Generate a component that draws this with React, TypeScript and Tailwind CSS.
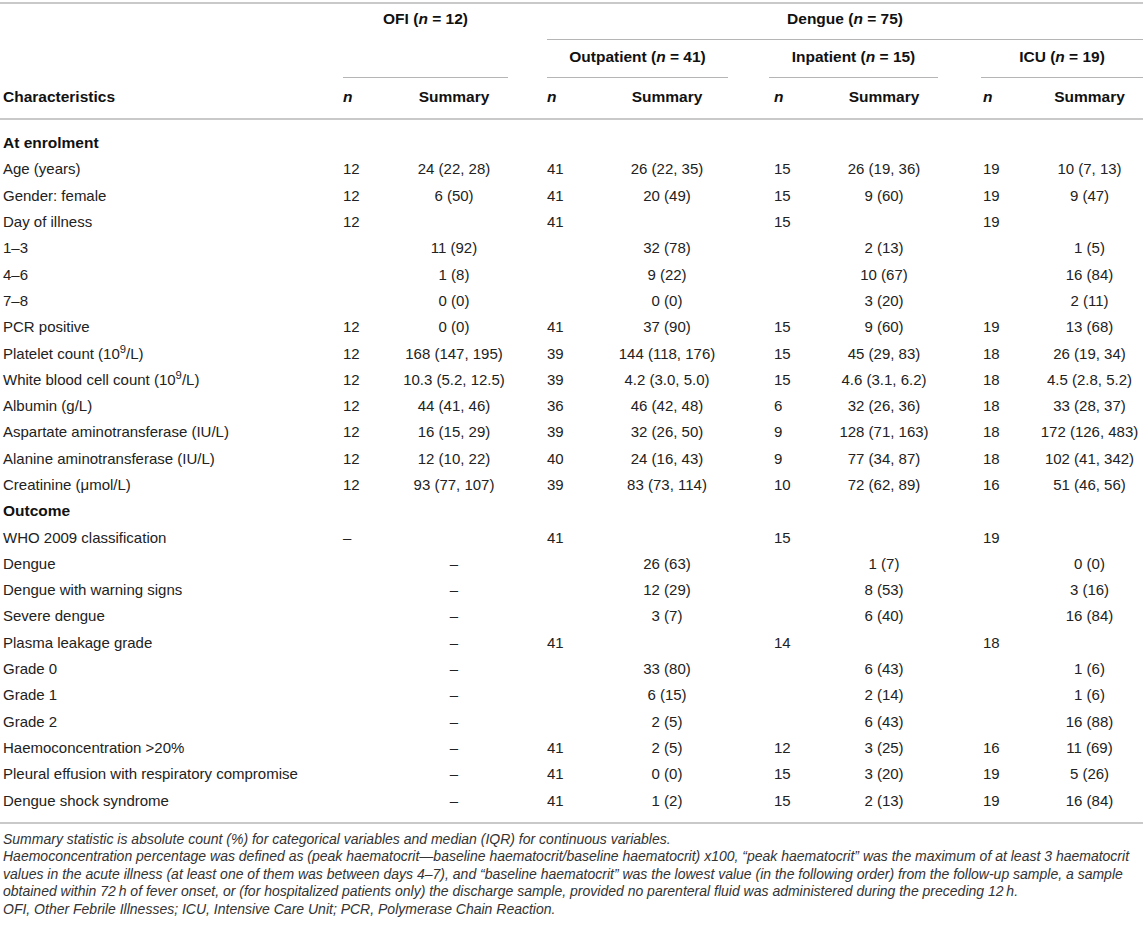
const GRID =
  'grid grid-cols-[343px_57px_108px_39px_59px_122px_41px_61px_108px_43px_55px_107px]';

type Row = {
  label: React.ReactNode;
  v: [string, string, string, string, string, string, string, string];
};

const enrolment: Row[] = [
  { label: 'Age (years)', v: ['12', '24 (22, 28)', '41', '26 (22, 35)', '15', '26 (19, 36)', '19', '10 (7, 13)'] },
  { label: 'Gender: female', v: ['12', '6 (50)', '41', '20 (49)', '15', '9 (60)', '19', '9 (47)'] },
  { label: 'Day of illness', v: ['12', '', '41', '', '15', '', '19', ''] },
  { label: '1–3', v: ['', '11 (92)', '', '32 (78)', '', '2 (13)', '', '1 (5)'] },
  { label: '4–6', v: ['', '1 (8)', '', '9 (22)', '', '10 (67)', '', '16 (84)'] },
  { label: '7–8', v: ['', '0 (0)', '', '0 (0)', '', '3 (20)', '', '2 (11)'] },
  { label: 'PCR positive', v: ['12', '0 (0)', '41', '37 (90)', '15', '9 (60)', '19', '13 (68)'] },
  {
    label: (
      <>
        Platelet count (10<sup>9</sup>/L)
      </>
    ),
    v: ['12', '168 (147, 195)', '39', '144 (118, 176)', '15', '45 (29, 83)', '18', '26 (19, 34)'],
  },
  {
    label: (
      <>
        White blood cell count (10<sup>9</sup>/L)
      </>
    ),
    v: ['12', '10.3 (5.2, 12.5)', '39', '4.2 (3.0, 5.0)', '15', '4.6 (3.1, 6.2)', '18', '4.5 (2.8, 5.2)'],
  },
  { label: 'Albumin (g/L)', v: ['12', '44 (41, 46)', '36', '46 (42, 48)', '6', '32 (26, 36)', '18', '33 (28, 37)'] },
  {
    label: 'Aspartate aminotransferase (IU/L)',
    v: ['12', '16 (15, 29)', '39', '32 (26, 50)', '9', '128 (71, 163)', '18', '172 (126, 483)'],
  },
  {
    label: 'Alanine aminotransferase (IU/L)',
    v: ['12', '12 (10, 22)', '40', '24 (16, 43)', '9', '77 (34, 87)', '18', '102 (41, 342)'],
  },
  { label: 'Creatinine (μmol/L)', v: ['12', '93 (77, 107)', '39', '83 (73, 114)', '10', '72 (62, 89)', '16', '51 (46, 56)'] },
];

const outcome: Row[] = [
  { label: 'WHO 2009 classification', v: ['–', '', '41', '', '15', '', '19', ''] },
  { label: 'Dengue', v: ['', '–', '', '26 (63)', '', '1 (7)', '', '0 (0)'] },
  { label: 'Dengue with warning signs', v: ['', '–', '', '12 (29)', '', '8 (53)', '', '3 (16)'] },
  { label: 'Severe dengue', v: ['', '–', '', '3 (7)', '', '6 (40)', '', '16 (84)'] },
  { label: 'Plasma leakage grade', v: ['', '–', '41', '', '14', '', '18', ''] },
  { label: 'Grade 0', v: ['', '–', '', '33 (80)', '', '6 (43)', '', '1 (6)'] },
  { label: 'Grade 1', v: ['', '–', '', '6 (15)', '', '2 (14)', '', '1 (6)'] },
  { label: 'Grade 2', v: ['', '–', '', '2 (5)', '', '6 (43)', '', '16 (88)'] },
  { label: 'Haemoconcentration >20%', v: ['', '–', '41', '2 (5)', '12', '3 (25)', '16', '11 (69)'] },
  { label: 'Pleural effusion with respiratory compromise', v: ['', '–', '41', '0 (0)', '15', '3 (20)', '19', '5 (26)'] },
  { label: 'Dengue shock syndrome', v: ['', '–', '41', '1 (2)', '15', '2 (13)', '19', '16 (84)'] },
];

function DataRow({ row }: { row: Row }) {
  const [ofiN, ofiS, outN, outS, inN, inS, icuN, icuS] = row.v;
  return (
    <div className={`${GRID} h-[26.3px] items-center leading-[20px]`}>
      <div className="pl-[3px] whitespace-nowrap">{row.label}</div>
      <div>{ofiN}</div>
      <div className="text-center">{ofiS}</div>
      <div />
      <div>{outN}</div>
      <div className="text-center">{outS}</div>
      <div />
      <div className="pl-[5px]">{inN}</div>
      <div className="text-center">{inS}</div>
      <div />
      <div className="pl-[2px]">{icuN}</div>
      <div className="text-center">{icuS}</div>
    </div>
  );
}

function SectionRow({ title }: { title: string }) {
  return (
    <div className="h-[26.3px] flex items-center pl-[3px] font-bold text-[15.5px] text-[#111] leading-[20px]">
      {title}
    </div>
  );
}

function Header() {
  return (
    <div
      className={`${GRID} grid-rows-[36px_38px_40px] border-b-2 border-[#c9c9c9] font-bold text-[15.5px] text-[#111] leading-[20px]`}
    >
      <div className="col-start-2 col-span-2 row-start-1 row-span-2 border-b border-[#b5b5b5] text-center pt-[5px]">
        OFI (<i>n</i> = 12)
      </div>
      <div className="col-start-5 col-span-8 row-start-1 border-b border-[#b5b5b5] text-center pt-[5px]">
        Dengue (<i>n</i> = 75)
      </div>
      <div className="col-start-5 col-span-2 row-start-2 border-b border-[#b5b5b5] text-center pt-[7px]">
        Outpatient (<i>n</i> = 41)
      </div>
      <div className="col-start-8 col-span-2 row-start-2 border-b border-[#b5b5b5] text-center pt-[7px]">
        Inpatient (<i>n</i> = 15)
      </div>
      <div className="col-start-11 col-span-2 row-start-2 border-b border-[#b5b5b5] text-center pt-[7px]">
        ICU (<i>n</i> = 19)
      </div>

      <div className="col-start-1 row-start-3 pl-[3px] pt-[9px]">Characteristics</div>
      <div className="col-start-2 row-start-3 pt-[9px] italic">n</div>
      <div className="col-start-3 row-start-3 pt-[9px] text-center">Summary</div>
      <div className="col-start-5 row-start-3 pt-[9px] italic">n</div>
      <div className="col-start-6 row-start-3 pt-[9px] text-center">Summary</div>
      <div className="col-start-8 row-start-3 pt-[9px] pl-[5px] italic">n</div>
      <div className="col-start-9 row-start-3 pt-[9px] text-center">Summary</div>
      <div className="col-start-11 row-start-3 pt-[9px] pl-[2px] italic">n</div>
      <div className="col-start-12 row-start-3 pt-[9px] text-center">Summary</div>
    </div>
  );
}

export default function App() {
  return (
    <div className="w-[1143px] h-[930px] bg-white pt-[2px] font-['Liberation_Sans',Arial,sans-serif] text-[15px] text-[#222] overflow-hidden">
      <div className="border-t-2 border-[#c9c9c9]">
        <Header />
        <div className="pt-[10px] pb-[8px] border-b-2 border-[#c9c9c9]">
          <SectionRow title="At enrolment" />
          {enrolment.map((r, i) => (
            <DataRow key={`e${i}`} row={r} />
          ))}
          <SectionRow title="Outcome" />
          {outcome.map((r, i) => (
            <DataRow key={`o${i}`} row={r} />
          ))}
        </div>
      </div>

      <div className="pt-[7px] pl-[3px] italic text-[14px] leading-[17.5px] text-[#333] whitespace-nowrap">
        <p>Summary statistic is absolute count (%) for categorical variables and median (IQR) for continuous variables.</p>
        <p>
          Haemoconcentration percentage was defined as (peak haematocrit—baseline haematocrit/baseline haematocrit) x100,
          “peak haematocrit” was the maximum of at least 3 haematocrit
          <br />
          values in the acute illness (at least one of them was between days 4–7), and “baseline haematocrit” was the
          lowest value (in the following order) from the follow-up sample, a sample
          <br />
          obtained within 72{'\u2009'}h of fever onset, or (for hospitalized patients only) the discharge sample, provided
          no parenteral fluid was administered during the preceding 12{'\u2009'}h.
        </p>
        <p>OFI, Other Febrile Illnesses; ICU, Intensive Care Unit; PCR, Polymerase Chain Reaction.</p>
      </div>
    </div>
  );
}
